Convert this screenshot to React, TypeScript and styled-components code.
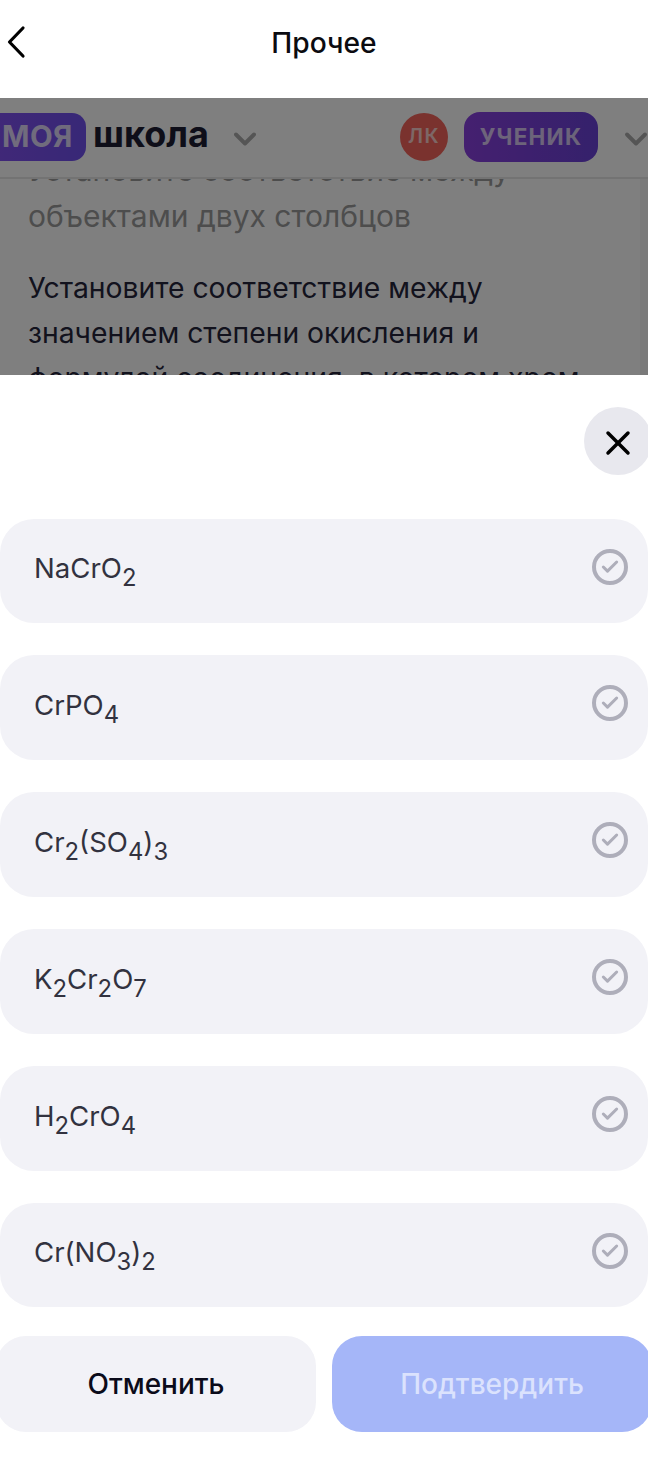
import React from 'react';
import styled, { createGlobalStyle } from 'styled-components';
import { Check, ChevronDown, X } from 'lucide-react';

const GlobalStyle = createGlobalStyle`
  html, body {
    margin: 0;
    padding: 0;
    background: #fff;
    font-family: Inter, "Liberation Sans", sans-serif;
  }
  * {
    box-sizing: border-box;
  }
`;

const Screen = styled.div`
  width: 648px;
  height: 1476px;
  display: flex;
  flex-direction: column;
  overflow: hidden;
  background: #fff;
`;

const TopBar = styled.header`
  height: 98px;
  flex: none;
  position: relative;
  display: flex;
  align-items: center;
  justify-content: center;
  padding-bottom: 13px;
`;

const BackButton = styled.button`
  position: absolute;
  left: 0;
  top: 21px;
  width: 34px;
  height: 42px;
  padding: 0;
  border: none;
  background: transparent;
  display: flex;
  align-items: center;
  justify-content: center;
  color: #000;
`;

const Title = styled.h1`
  margin: 0;
  font-size: 28.2px;
  line-height: 34px;
  font-weight: 500;
  color: #0b0b10;
`;

const Backdrop = styled.div`
  height: 277px;
  flex: none;
  position: relative;
  overflow: hidden;
  background: #fff;

  &::after {
    content: '';
    position: absolute;
    inset: 0;
    background: rgba(0, 0, 0, 0.5);
  }
`;

const SiteNav = styled.div`
  width: 660px;
  height: 81px;
  display: flex;
  align-items: center;
  border-bottom: 2px solid #e6e6e6;
  padding-bottom: 1px;
  white-space: nowrap;
`;

const LogoBadge = styled.span`
  flex: none;
  width: 86px;
  height: 48px;
  border-radius: 0 14px 14px 0;
  background: linear-gradient(90deg, #8050f0, #7050ee);
  color: rgba(255, 255, 255, 0.78);
  display: flex;
  align-items: center;
  padding: 0 0 2px 2px;
  font-size: 29.5px;
  font-weight: 700;
  letter-spacing: 0.4px;
`;

const LogoText = styled.span`
  flex: none;
  width: 114px;
  margin-left: 7px;
  margin-top: -7px;
  font-size: 36px;
  font-weight: 700;
  color: #1d1d33;
`;

const NavChevron = styled.span<{ $gap: number }>`
  flex: none;
  display: flex;
  margin-left: ${props => props.$gap}px;
  margin-top: 4px;
  color: #aaa;
`;

const Avatar = styled.span`
  flex: none;
  width: 48px;
  height: 48px;
  margin-left: 137px;
  border-radius: 50%;
  background: #f4655c;
  color: rgba(255, 255, 255, 0.7);
  display: flex;
  align-items: center;
  justify-content: center;
  padding-bottom: 2px;
  font-size: 20px;
  font-weight: 600;
  letter-spacing: 1.4px;
`;

const RoleBadge = styled.span`
  flex: none;
  width: 134px;
  height: 50px;
  margin-left: 16px;
  border-radius: 16px;
  background: linear-gradient(90deg, #8a40e0, #6a42d8);
  color: rgba(255, 255, 255, 0.72);
  display: flex;
  align-items: center;
  justify-content: center;
  padding-bottom: 2px;
  font-size: 22.5px;
  font-weight: 700;
  letter-spacing: 1.2px;
`;

const Article = styled.div`
  position: relative;
  height: 196px;
  padding: 0 0 0 28px;
  overflow: hidden;
  border-right: 8px solid #f4f4f4;
`;

const Subtitle = styled.p`
  margin: -32px 0 0;
  font-size: 30px;
  line-height: 46px;
  color: #9a9a9a;
`;

const Paragraph = styled.p`
  margin: 27px 0 0;
  font-size: 28.3px;
  line-height: 45px;
  width: 590px;
  color: #24243a;
`;

const Sheet = styled.section`
  flex: 1;
  display: flex;
  flex-direction: column;
  background: #fff;
  padding-top: 32px;
`;

const CloseRow = styled.div`
  display: flex;
  justify-content: flex-end;
  margin-bottom: 43.6px;
`;

const CloseButton = styled.button`
  width: 68px;
  height: 68px;
  flex: none;
  margin-right: -4px;
  padding: 4px 0 0;
  border: none;
  border-radius: 50%;
  background: #e8e8ee;
  color: #000;
  display: flex;
  align-items: center;
  justify-content: center;
`;

const Options = styled.div`
  display: flex;
  flex-direction: column;
  gap: 32px;
`;

const Option = styled.div`
  height: 104.8px;
  border-radius: 34px;
  background: #f2f2f7;
  position: relative;
  display: flex;
  align-items: center;
  padding-left: 34px;
  padding-bottom: 5px;
`;

const Formula = styled.span`
  font-size: 27.6px;
  line-height: 36px;
  color: #32323f;

  sub {
    font-size: 23.8px;
    line-height: 0;
    vertical-align: -8px;
  }
`;

const CheckMark = styled.span`
  position: absolute;
  top: 30px;
  right: 20px;
  width: 36px;
  height: 36px;
  border: 4px solid #aeaeba;
  border-radius: 50%;
  color: #aeaeba;
  display: flex;
  align-items: center;
  justify-content: center;
`;

const Actions = styled.div`
  display: grid;
  grid-template-columns: 320px 320px;
  gap: 16px;
  margin-top: 28.4px;
  margin-left: -4px;
`;

const ActionButton = styled.button<{ $primary?: boolean }>`
  height: 96px;
  padding: 0;
  border: none;
  border-radius: 30px;
  font-family: inherit;
  font-size: 28px;
  font-weight: 500;
  background: ${props => (props.$primary ? '#a5b6f8' : '#f2f2f7')};
  color: ${props => (props.$primary ? '#dbe2fd' : '#0b0b1a')};
`;

const formulas: React.ReactNode[] = [
  <>NaCrO<sub>2</sub></>,
  <>CrPO<sub>4</sub></>,
  <>Cr<sub>2</sub>(SO<sub>4</sub>)<sub>3</sub></>,
  <>K<sub>2</sub>Cr<sub>2</sub>O<sub>7</sub></>,
  <>H<sub>2</sub>CrO<sub>4</sub></>,
  <>Cr(NO<sub>3</sub>)<sub>2</sub></>,
];

export default function App() {
  return (
    <Screen>
      <GlobalStyle />
      <TopBar>
        <BackButton aria-label="Назад">
          <svg width="34" height="42" viewBox="0 0 34 42" fill="none">
            <path d="M23 7 L9.5 21 L23 35" stroke="currentColor" strokeWidth="3.2" strokeLinecap="round" strokeLinejoin="round" />
          </svg>
        </BackButton>
        <Title>Прочее</Title>
      </TopBar>

      <Backdrop>
        <SiteNav>
          <LogoBadge>МОЯ</LogoBadge>
          <LogoText>школа</LogoText>
          <NavChevron $gap={20}>
            <ChevronDown size={36} strokeWidth={2.6} />
          </NavChevron>
          <Avatar>ЛК</Avatar>
          <RoleBadge>УЧЕНИК</RoleBadge>
          <NavChevron $gap={20}>
            <ChevronDown size={36} strokeWidth={2.6} />
          </NavChevron>
        </SiteNav>
        <Article>
          <Subtitle>
            Установите соответствие между
            <br />
            объектами двух столбцов
          </Subtitle>
          <Paragraph>
            Установите соответствие между значением степени окисления и
            формулой соединения, в котором хром
          </Paragraph>
        </Article>
      </Backdrop>

      <Sheet>
        <CloseRow>
          <CloseButton aria-label="Закрыть">
            <X size={40} strokeWidth={2.1} />
          </CloseButton>
        </CloseRow>
        <Options>
          {formulas.map((formula, index) => (
            <Option key={index}>
              <Formula>{formula}</Formula>
              <CheckMark>
                <Check size={20} strokeWidth={3.6} />
              </CheckMark>
            </Option>
          ))}
        </Options>
        <Actions>
          <ActionButton>Отменить</ActionButton>
          <ActionButton $primary>Подтвердить</ActionButton>
        </Actions>
      </Sheet>
    </Screen>
  );
}
